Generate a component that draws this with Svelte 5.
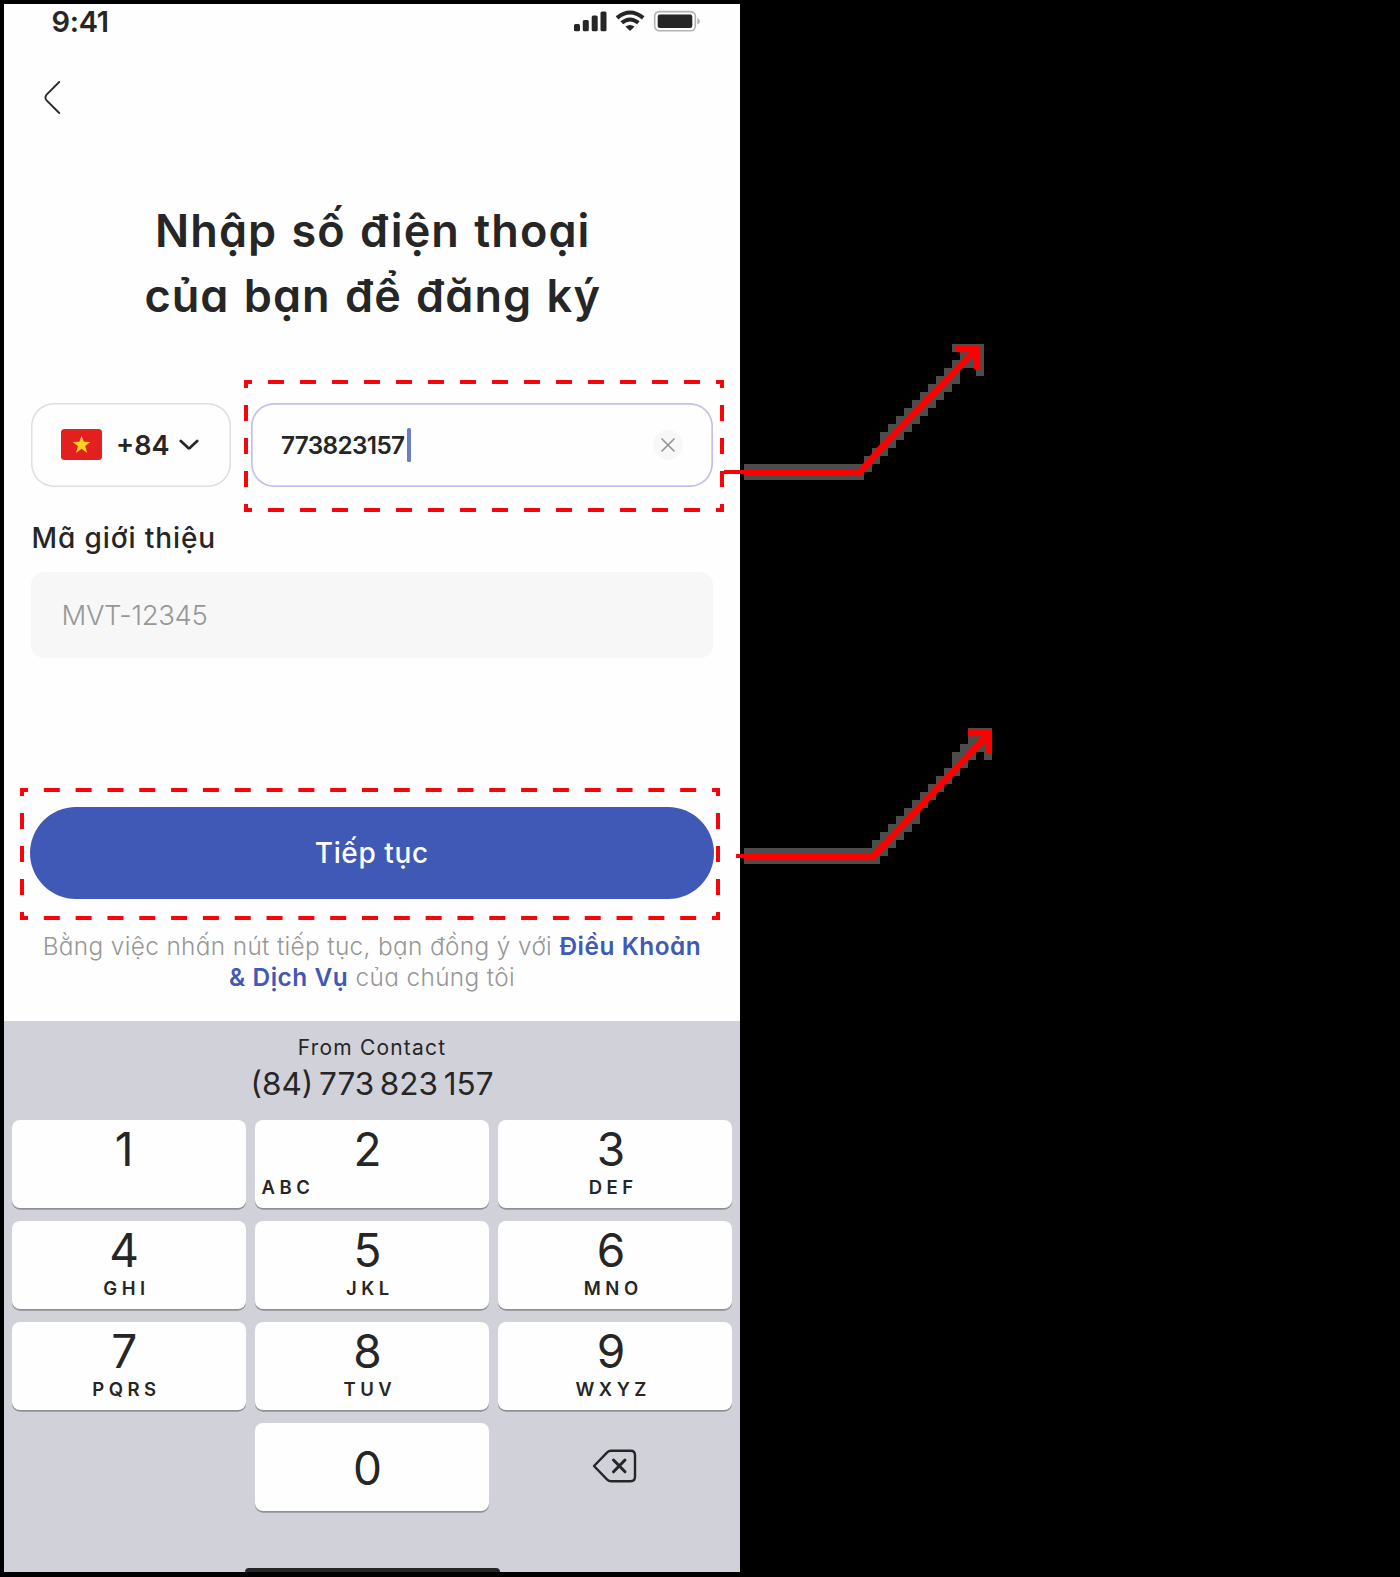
<script>
  const keys = [
    { digit: '1', letters: '' },
    { digit: '2', letters: 'ABC', left: true },
    { digit: '3', letters: 'DEF' },
    { digit: '4', letters: 'GHI' },
    { digit: '5', letters: 'JKL' },
    { digit: '6', letters: 'MNO' },
    { digit: '7', letters: 'PQRS' },
    { digit: '8', letters: 'TUV' },
    { digit: '9', letters: 'WXYZ' }
  ];

  // Stepped halo behind each callout arrow: [y, x1, x2], every step 8px tall
  const haloTop = [
    [344, 952, 984], [352, 960, 984], [360, 952, 984], [368, 944, 960], [368, 976, 984],
    [376, 936, 960], [384, 928, 952], [392, 920, 944], [400, 912, 936], [408, 904, 928],
    [416, 896, 920], [424, 888, 912], [432, 880, 904], [440, 880, 896], [448, 872, 888],
    [456, 864, 880], [464, 744, 872], [472, 744, 864]
  ];
  const haloBottom = [
    [728, 968, 992], [736, 968, 992], [744, 960, 992], [752, 952, 976], [752, 984, 992],
    [760, 952, 968], [768, 944, 960], [776, 936, 952], [784, 928, 944], [792, 920, 936],
    [800, 912, 928], [808, 904, 920], [816, 896, 920], [824, 888, 912], [832, 880, 904],
    [840, 872, 896], [848, 744, 888], [856, 744, 880]
  ];
  const halo = [...haloTop, ...haloBottom];
</script>

<main class="board">
  <section class="phone">
    <header class="status">
      <span class="time">9:41</span>
      <svg class="indicators" width="126" height="24" viewBox="0 0 126 24">
        <g fill="#262626">
          <rect x="0" y="14" width="6" height="7.3" rx="1.5" />
          <rect x="8.8" y="10" width="6" height="11.3" rx="1.5" />
          <rect x="17.7" y="5.5" width="6" height="15.8" rx="1.5" />
          <rect x="26.5" y="1.4" width="6" height="19.9" rx="1.5" />
          <path d="M56 21 L51.4 16.6 Q56 13.4 60.6 16.6 Z" />
          <rect x="83.7" y="4.5" width="34.6" height="13.4" rx="2.2" />
        </g>
        <g fill="none" stroke="#262626" stroke-width="4">
          <path d="M43 7.9 Q56 -2.9 69.2 7.9" />
          <path d="M47.8 12.8 Q56 6.1 64.4 12.8" />
        </g>
        <rect x="80.7" y="1.6" width="40.6" height="19.2" rx="4.5" fill="none" stroke="#b2b2b2" stroke-width="1.6" />
        <path d="M123.3 8 Q125.8 9 125.8 11.2 Q125.8 13.4 123.3 14.4 Z" fill="#b2b2b2" />
      </svg>
    </header>

    <nav class="nav">
      <svg width="20" height="36" viewBox="0 0 20 36" fill="none" stroke="#262626" stroke-width="1.8" stroke-linecap="round" stroke-linejoin="round">
        <path d="M15.2 2 L2.6 14.6 Q0.2 17.5 2.6 20.4 L15.2 33" />
      </svg>
    </nav>

    <h1 class="title"><span class="line">Nhập số điện thoại</span><span class="line">của bạn để đăng ký</span></h1>

    <div class="phone-row">
      <div class="country">
        <svg class="flag" width="41" height="31" viewBox="0 0 41 31">
          <rect width="41" height="31" rx="3.5" fill="#e41f1f" />
          <path d="M20.6 6.4 L22.8 12.8 L29.6 12.9 L24.2 17 L26.2 23.9 L20.6 19.8 L15 23.9 L17 17 L11.6 12.9 L18.4 12.8 Z" fill="#ffd01f" />
        </svg>
        <span class="code">+84</span>
        <svg class="caret-down" width="20" height="14" viewBox="0 0 20 14" fill="none" stroke="#262626" stroke-width="2.7" stroke-linecap="round" stroke-linejoin="round">
          <path d="M1.8 3 L8.8 9.6 Q10 10.6 11.2 9.6 L18.2 3" />
        </svg>
      </div>
      <div class="number">
        <span class="digits">773823157</span>
        <i class="cursor"></i>
        <svg class="clear" width="30" height="30" viewBox="0 0 30 30">
          <circle cx="15" cy="15" r="15" fill="#f7f7f7" />
          <path d="M8.5 8.5 L21.5 21.5 M21.5 8.5 L8.5 21.5" stroke="#939393" stroke-width="1.6" />
        </svg>
      </div>
    </div>

    <div class="label">Mã giới thiệu</div>
    <div class="referral">MVT-12345</div>

    <div class="submit">Tiếp tục</div>

    <p class="terms">
      <span class="line">Bằng việc nhấn nút tiếp tục, bạn đồng ý với <b>Điều Khoản</b></span>
      <span class="line"><b>&amp; Dịch Vụ</b> của chúng tôi</span>
    </p>

    <div class="keyboard">
      <div class="from">From Contact</div>
      <div class="suggestion">(84) 773 823 157</div>
      <div class="keys">
        {#each keys as key}
          <div class="key">
            <span class="digit">{key.digit}</span>
            <span class="letters" class:left={key.left}>{key.letters}</span>
          </div>
        {/each}
        <div></div>
        <div class="key zero"><span class="digit">0</span></div>
        <div class="erase">
          <svg width="45" height="34" viewBox="0 0 45 34" fill="none" stroke="#262626" stroke-width="2.4" stroke-linejoin="round" stroke-linecap="round">
            <path d="M2 17 L15.2 3.4 Q16.8 1.8 19 1.8 H38.6 Q43 1.8 43 6.2 V27.8 Q43 32.2 38.6 32.2 H19 Q16.8 32.2 15.2 30.6 Z" />
            <path d="M21.5 11 L33 22.8 M33 11 L21.5 22.8" stroke-width="3" />
          </svg>
        </div>
      </div>
      <div class="home"></div>
    </div>
  </section>

  <!-- Callouts drawn over the screen -->
  <svg class="callouts" width="1400" height="1577" viewBox="0 0 1400 1577" fill="none" stroke="#ff0000">
    <g fill="#4e4c4a" stroke="none" shape-rendering="crispEdges">
      {#each halo as [y, x1, x2]}
        <rect x={x1} {y} width={x2 - x1} height="8" />
      {/each}
    </g>
    <g stroke="#f9020a" stroke-width="4">
      <path d="M244 382 H724 M244 510 H724" stroke-dasharray="16 16" stroke-dashoffset="8" />
      <path d="M246 380 V512 M722 380 V512" stroke-dasharray="16 17" stroke-dashoffset="8" />
      <path d="M20 790 H720 M20 918 H720" stroke-dasharray="16 15.818" stroke-dashoffset="8" />
      <path d="M22 788 V920 M718 788 V920" stroke-dasharray="16 17" stroke-dashoffset="8" />
      <path d="M724 472 H746 M736 856 H746" />
    </g>
    <g stroke-width="6.5" stroke-linejoin="round">
      <path d="M744 472.7 H859.5 L886 442.5 L976 349.5" />
      <path d="M956 349 H977 V369" />
      <path d="M744 857 H872.5 L988 734.5" />
      <path d="M968 733 H988.8 V753" />
    </g>
  </svg>
</main>

<style>
  :global(body) {
    margin: 0;
    background: #000;
  }
  .board {
    position: relative;
    box-sizing: border-box;
    width: 1400px;
    height: 1577px;
    padding: 4px;
    background: #000;
    color: #262626;
    font-family: Inter, 'Liberation Sans', sans-serif;
    font-feature-settings: 'cv11';
    white-space: nowrap;
    overflow: hidden;
  }
  .phone {
    display: flex;
    flex-direction: column;
    width: 736px;
    height: 1568px;
    background: #fefefe;
    overflow: hidden;
  }
  .status {
    display: flex;
    justify-content: space-between;
    height: 56px;
    padding: 0 40px 0 47.5px;
  }
  .time {
    font-size: 29px;
    font-weight: 600;
    line-height: 35px;
    letter-spacing: -0.3px;
  }
  .indicators {
    margin-top: 6px;
  }
  .nav {
    height: 117.5px;
    padding: 20px 0 0 40px;
    box-sizing: content-box;
  }
  .line {
    display: block;
  }
  .title {
    margin: 0 -1.5px 0 0;
    font-size: 45px;
    font-weight: 600;
    line-height: 65px;
    letter-spacing: 1.1px;
    word-spacing: 1.8px;
    text-align: center;
  }
  .phone-row {
    display: flex;
    gap: 20px;
    margin: 75.5px 27px 0;
  }
  .country,
  .number {
    display: flex;
    align-items: center;
    box-sizing: border-box;
    height: 84px;
    padding-left: 30px;
    border-radius: 23px;
    box-shadow: inset 0 0 0 1.5px #dedede;
  }
  .country {
    width: 200px;
  }
  .flag {
    margin-top: -1px;
  }
  .code {
    margin-left: 14px;
    width: 52px;
    font-size: 27px;
    font-weight: 600;
  }
  .caret-down {
    margin-left: 11px;
  }
  .number {
    width: 462px;
    padding-right: 30px;
    box-shadow: inset 0 0 0 1.7px #c3c0ec;
  }
  .digits {
    width: 126px;
    font-size: 24.3px;
    font-weight: 600;
    letter-spacing: -0.65px;
  }
  .cursor {
    width: 4px;
    height: 34px;
    border-radius: 1.5px;
    background: #6a7ec5;
  }
  .clear {
    margin-left: auto;
  }
  .label {
    margin: 33px 0 0 27.5px;
    font-size: 28px;
    font-weight: 500;
    line-height: 36px;
    letter-spacing: 0.9px;
    word-spacing: 0;
  }
  .referral {
    box-sizing: border-box;
    margin: 16px 27px 0 26.5px;
    height: 86px;
    padding-left: 31px;
    border-radius: 13px;
    background: #f7f7f7;
    color: #979797;
    font-size: 27.5px;
    font-weight: 300;
    line-height: 87px;
    letter-spacing: -0.35px;
  }
  .submit {
    margin: 149px 26.5px 0 26px;
    height: 92px;
    border-radius: 46px;
    background: #4059b6;
    color: #fff;
    font-size: 28px;
    font-weight: 500;
    line-height: 93px;
    letter-spacing: 0.6px;
    text-align: center;
  }
  .terms {
    margin: 32px 0 0;
    height: 61px;
    color: #979797;
    font-size: 24.4px;
    font-weight: 300;
    line-height: 30.5px;
    letter-spacing: 0.3px;
    word-spacing: 0.2px;
    text-align: center;
  }
  .terms b {
    color: #4059b6;
    font-weight: 600;
    letter-spacing: 0.5px;
  }
  .keyboard {
    display: flex;
    flex-direction: column;
    flex: 1;
    margin-top: 29px;
    padding-top: 12.5px;
    background: #d1d1d9;
    text-align: center;
    font-feature-settings: normal;
  }
  .from {
    font-size: 21px;
    font-weight: 400;
    line-height: 28px;
    letter-spacing: 1.2px;
  }
  .suggestion {
    margin-top: 2px;
    font-size: 31.5px;
    font-weight: 400;
    line-height: 40px;
    word-spacing: -3.2px;
  }
  .keys {
    display: grid;
    grid-template-columns: repeat(3, 234px);
    grid-auto-rows: 87.5px;
    gap: 13.5px 9.4px;
    margin: 16.5px 0 0 7.7px;
  }
  .key {
    display: flex;
    flex-direction: column;
    box-sizing: border-box;
    padding: 3px 9px 0 0;
    border-radius: 8px;
    background: #fefefe;
    box-shadow: 0 1.7px 0 #8f9094;
  }
  .zero {
    padding-top: 19px;
  }
  .digit {
    font-size: 46px;
    line-height: 52px;
  }
  .letters {
    font-size: 18.5px;
    font-weight: 600;
    line-height: 24px;
    letter-spacing: 4.5px;
    margin-right: -4.5px;
  }
  .left {
    padding-left: 6.5px;
    text-align: left;
  }
  .erase {
    padding: 26px 2.5px 0 0;
  }
  .home {
    width: 255px;
    height: 4px;
    margin: auto auto 0 240.5px;
    border-radius: 4px 4px 0 0;
    background: #262628;
  }
  .callouts {
    position: absolute;
    inset: 0;
  }
</style>
